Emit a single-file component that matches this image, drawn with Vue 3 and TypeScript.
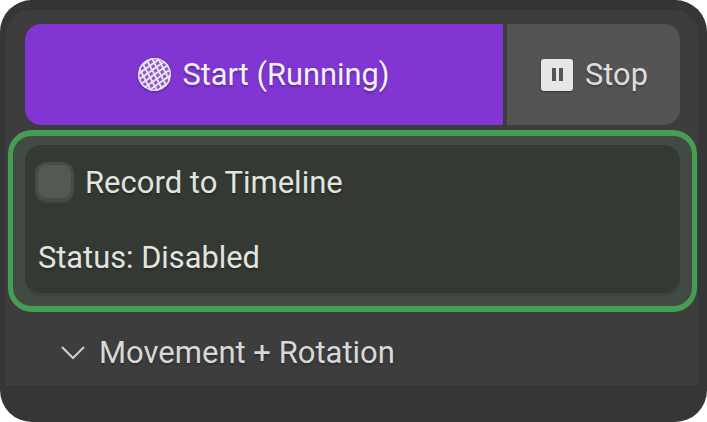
<script setup lang="ts">
// hatch lines for the running icon
const hatchA = [-24, -18, -12, -6, 0, 6, 12, 18, 24]
const hatchB = [-24, -18, -12, -6, 0, 6, 12, 18, 24]
</script>

<template>
  <div class="panel">
    <div class="top-strip"></div>
    <div class="content">
      <div class="actions">
        <button class="btn start">
          <svg class="globe" width="33" height="33" viewBox="-16.5 -16.5 33 33">
            <defs>
              <clipPath id="globe-clip"><circle r="16.5" /></clipPath>
            </defs>
            <circle r="16.5" fill="#8f5ac8" />
            <g clip-path="url(#globe-clip)" stroke="#ece6f3" stroke-width="1.8">
              <line v-for="a in hatchA" :key="a" :x1="a - 9" y1="-17" :x2="a + 9" y2="17" />
              <line v-for="b in hatchB" :key="b" x1="-17" :y1="b + 12" x2="17" :y2="b - 12" />
            </g>
            <circle r="15.7" fill="none" stroke="#e4dcef" stroke-width="1.4" />
          </svg>
          <span>Start (Running)</span>
        </button>
        <button class="btn stop">
          <span class="pause"><i></i><i></i></span>
          <span>Stop</span>
        </button>
      </div>

      <div class="record-frame">
        <div class="record-box">
          <label class="record-row">
            <span class="checkbox"></span>
            <span class="record-label">Record to Timeline</span>
          </label>
          <div class="status">Status: Disabled</div>
        </div>
      </div>

      <div class="subpanel">
        <svg width="26" height="18" viewBox="0 0 26 18" fill="none">
          <path d="M2 3 L13 14 L24 3" stroke="#cfcfcf" stroke-width="2" />
        </svg>
        <span>Movement + Rotation</span>
      </div>
    </div>
  </div>
</template>

<style scoped>
.panel {
  width: 707px;
  height: 422px;
  box-sizing: border-box;
  background: #363636;
  border-radius: 32px;
  overflow: hidden;
  font-family: Roboto, "Liberation Sans", sans-serif;
  font-size: 31px;
  color: #e6e6e6;
  text-shadow: 0 2px 2px rgba(0, 0, 0, 0.25);
}

.top-strip {
  height: 10px;
  background: #333333;
  margin: 0 30px;
}

.content {
  height: 375px;
  margin: 0 9px 0 6px;
  background: #3d3d3d;
  border-radius: 24px 24px 0 0;
  padding-top: 14px;
  box-sizing: border-box;
}

.actions {
  display: flex;
  gap: 4px;
  height: 101px;
  padding: 0 18px 0 19px;
}

.btn {
  border: none;
  display: flex;
  align-items: center;
  justify-content: center;
  font-family: inherit;
  font-size: 30.8px;
  padding: 0;
  color: #f2f2f2;
  text-shadow: inherit;
}

.start {
  flex: 1;
  gap: 11px;
  background: #8136d3;
  border-radius: 16px 0 0 16px;
  box-shadow: 0 0 0 1px #3a3a3a;
}

.globe {
  filter: drop-shadow(0 1px 1px rgba(0, 0, 0, 0.3));
}

.stop {
  width: 173px;
  gap: 12px;
  padding-left: 2px;
  box-sizing: border-box;
  background: #545454;
  border-radius: 0 16px 16px 0;
  color: #dddddd;
}

.pause {
  width: 32px;
  height: 32px;
  border-radius: 3px;
  background: #e6e6e6;
  display: flex;
  align-items: center;
  justify-content: center;
  gap: 3px;
  box-shadow: 0 1px 2px rgba(0, 0, 0, 0.4);
}

.pause i {
  width: 4px;
  height: 13px;
  background: #555555;
}

.record-frame {
  margin: 5px 1px 0 2px;
  height: 182px;
  box-sizing: border-box;
  border-style: solid;
  border-color: #459e52;
  border-width: 6px 5px;
  border-radius: 24px;
  background: #424a44;
  padding: 9px 12px 13px;
}

.record-box {
  height: 100%;
  box-sizing: border-box;
  background: #343a33;
  border-radius: 16px;
  padding: 16px 0 0 13px;
  color: #e2e4e0;
  box-shadow: 0 3px 0 #3d443e;
}

.record-row {
  display: flex;
  align-items: center;
  gap: 14px;
  height: 40px;
}

.record-label {
  padding-top: 3px;
}

.checkbox {
  width: 33px;
  height: 33px;
  border-radius: 9px;
  background: #535a54;
  box-shadow: 0 0 0 3px #454d46, 0 2px 0 3px #3f4640;
}

.status {
  margin-top: 38px;
  font-size: 30.8px;
}

.subpanel {
  display: flex;
  align-items: center;
  gap: 13px;
  padding: 22px 0 0 54px;
  color: #d8d8d8;
}
</style>

<style>
html,
body {
  margin: 0;
  background: #ffffff;
}
</style>
